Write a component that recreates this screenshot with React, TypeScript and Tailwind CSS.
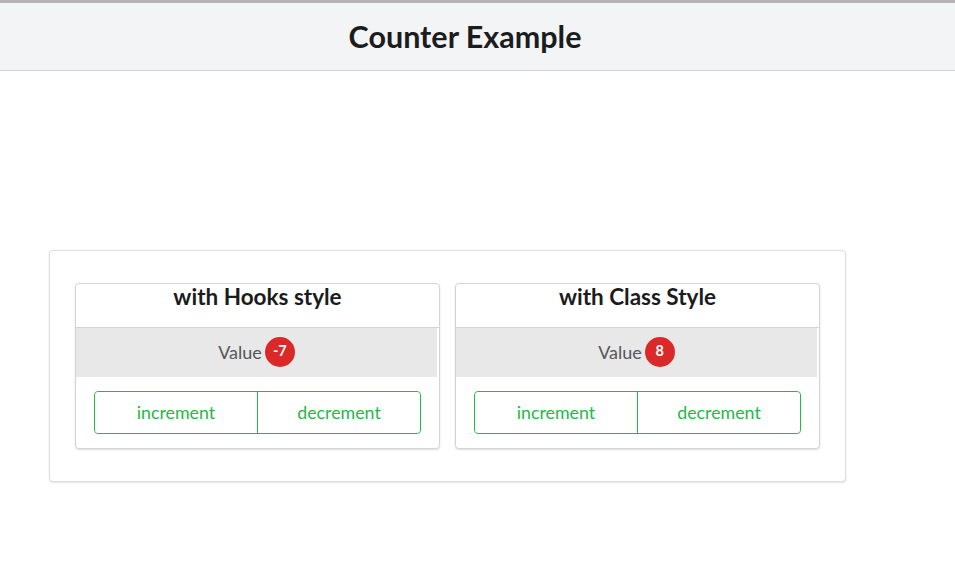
import React from "react";

function CounterCard({ title, value, className }: { title: string; value: number; className: string }) {
  return (
    <div className={className + " rounded-[4px] border border-[#d4d4d5] bg-white shadow-[0_1px_2px_rgba(34,36,38,0.15)] flex flex-col"}>
      <div className="h-[44px] flex justify-center text-[22.5px] font-bold leading-[26px] text-[#1b1c1d] border-b border-[#d4d4d5]">
        {title}
      </div>
      <div className="h-[49px] mr-[2px] bg-[#e8e8e8] flex items-center justify-center gap-[3px] pb-[2px]">
        <span className="text-[18px] text-[#55575a] leading-none">Value</span>
        <span className="w-[30px] h-[30px] rounded-full bg-[#db2828] text-white text-[14.5px] font-bold flex items-center justify-center leading-none">
          {value}
        </span>
      </div>
      <div className="px-[18px] pt-[14px] pb-[14px]">
        <div className="flex h-[43px] rounded-[4px] border border-[#21ba45]">
          <button className="flex-1 text-[17.8px] text-[#21ba45] border-r border-[#21ba45] bg-white rounded-l-[4px]">
            increment
          </button>
          <button className="flex-1 text-[17.8px] text-[#21ba45] bg-white rounded-r-[4px]">
            decrement
          </button>
        </div>
      </div>
    </div>
  );
}

export default function App() {
  return (
    <div className="min-h-[581px] bg-white" style={{ fontFamily: "Lato, 'Helvetica Neue', Arial, sans-serif" }}>
      <div className="border-t-[3px] border-[#b5b5b5] bg-[#f3f4f5] border-b border-b-[#d4d4d5] h-[71px] flex items-center justify-center pr-[25px]">
        <h1 className="text-[30.5px] font-bold text-[#1b1c1d] leading-none">Counter Example</h1>
      </div>
      <div className="pt-[179px] pl-[49px]">
        <div className="w-[797px] rounded-[4px] border border-[#dedede] shadow-[0_1px_2px_rgba(34,36,38,0.12)] bg-white pt-[32px] pb-[32px] pl-[25px] pr-[25px] flex gap-[15px]">
          <CounterCard className="w-[365px]" title="with Hooks style" value={-7} />
          <CounterCard className="flex-1" title="with Class Style" value={8} />
        </div>
      </div>
    </div>
  );
}
